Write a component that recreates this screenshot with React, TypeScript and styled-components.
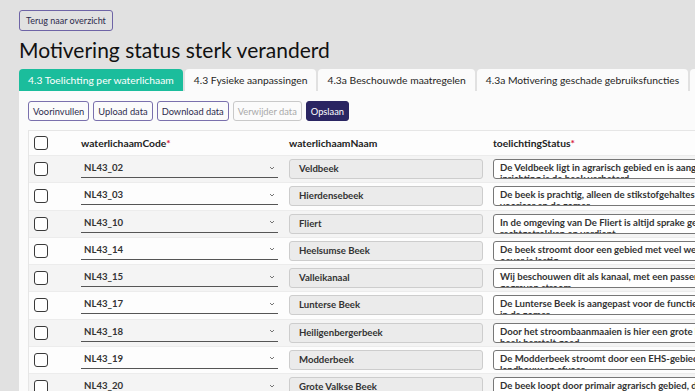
import React from 'react';
import styled, { createGlobalStyle } from 'styled-components';

const GlobalStyle = createGlobalStyle`
  html, body {
    margin: 0;
    padding: 0;
    background: #e1e1e1;
    overflow: hidden;
    font-family: Lato, "Noto Sans", sans-serif;
    color: #1f1f24;
  }
`;

const Page = styled.div`
  padding: 10px 0 0 19px;
  width: 676px;
`;

const BackButton = styled.button`
  font-family: inherit;
  font-size: 9px;
  color: #2d2b4d;
  background: transparent;
  border: 1px solid #6e64a6;
  border-radius: 3px;
  height: 21px;
  padding: 0 6px;
  cursor: pointer;
  display: block;
`;

const Title = styled.h1`
  margin: 4px 0 4px;
  font-size: 21px;
  font-weight: 400;
  line-height: 30px;
  color: #111;
`;

const Tabs = styled.div`
  display: flex;
  gap: 2px;
  white-space: nowrap;
`;

const Tab = styled.div<{ $active?: boolean }>`
  height: 22px;
  line-height: 22px;
  padding: 0 9px;
  font-size: 10.3px;
  border-radius: 4px 4px 0 0;
  background: ${(p) => (p.$active ? '#1bbd9c' : '#fbfbfb')};
  color: ${(p) => (p.$active ? '#fff' : '#1f1f24')};
  flex-shrink: 0;
`;

const Panel = styled.div`
  background: #fbfbfb;
  padding: 10px 0 0 9px;
  height: 320px;
`;

const Toolbar = styled.div`
  display: flex;
  gap: 4px;
  margin-bottom: 9px;
`;

const ActionButton = styled.button<{ $variant?: 'primary' | 'disabled' }>`
  font-family: inherit;
  font-size: 9.3px;
  height: 20px;
  padding: 0 4px;
  border-radius: 3px;
  border: 1px solid
    ${(p) => (p.$variant === 'disabled' ? '#c9c9c9' : p.$variant === 'primary' ? '#2a2562' : '#7a70ad')};
  background: ${(p) => (p.$variant === 'primary' ? '#2a2562' : 'transparent')};
  color: ${(p) => (p.$variant === 'disabled' ? '#a9a9a9' : p.$variant === 'primary' ? '#fff' : '#2d2b4d')};
`;

const Table = styled.div`
  border-top: 1px solid #e6e6e6;
  border-left: 1px solid #e6e6e6;
`;

const Row = styled.div<{ $shade?: boolean; $head?: boolean }>`
  display: grid;
  grid-template-columns: 52px 208px 204px 1fr;
  align-items: center;
  height: ${(p) => (p.$head ? '24px' : '26.25px')};
  background: ${(p) => (p.$shade ? '#f4f4f4' : '#fdfdfd')};
  border-bottom: 1px solid #ececec;
  overflow: hidden;
`;

const CheckCell = styled.div`
  display: flex;
  padding-left: 5px;
`;

const Checkbox = styled.span`
  width: 12px;
  height: 12px;
  border: 1.5px solid #3a3a3a;
  border-radius: 3px;
  background: #fff;
`;

const HeadCell = styled.div`
  font-size: 10.3px;
  font-weight: 700;
  color: #222;
  white-space: nowrap;
`;

const Required = styled.span`
  color: #d4163c;
`;

const Select = styled.div`
  width: 197px;
  height: 18px;
  box-sizing: border-box;
  border-bottom: 1px solid #555;
  display: flex;
  align-items: center;
  justify-content: space-between;
  padding: 0 3px 2px 3px;
  font-size: 9.6px;
  font-weight: 700;
  color: #333;
`;

const NameField = styled.div`
  width: 194px;
  height: 20px;
  box-sizing: border-box;
  border: 1px solid #cdcdcd;
  border-radius: 3px;
  background: #ebebeb;
  font-size: 9.6px;
  font-weight: 700;
  color: #333;
  padding-left: 9px;
  line-height: 18px;
`;

const StatusField = styled.textarea`
  width: 420px;
  height: 20px;
  box-sizing: border-box;
  border: 1px solid #777;
  border-radius: 3px;
  background: #fff;
  font-family: inherit;
  font-size: 9.6px;
  font-weight: 700;
  color: #333;
  line-height: 11px;
  padding: 2px 0 0 6px;
  resize: none;
  overflow: hidden;
  margin: 0;
  display: block;
`;

const Chevron = () => (
  <svg width="6" height="4" viewBox="0 0 6 4">
    <path d="M1 1l2 2 2-2" fill="none" stroke="#666" strokeWidth="0.9" />
  </svg>
);

const rows = [
  ['NL43_02', 'Veldbeek', 'De Veldbeek ligt in agrarisch gebied en is aangepast voor de functie. Met gebruik van variatie in inrichting is de beek verbeterd.'],
  ['NL43_03', 'Hierdensebeek', 'De beek is prachtig, alleen de stikstofgehaltes of fosfaat zijn soms aan de hoge kant in het voorjaar en de zomer.'],
  ['NL43_10', 'Fliert', 'In de omgeving van De Fliert is altijd sprake geweest van landbouw, waardoor de beek is rechtgetrokken en verdiept.'],
  ['NL43_14', 'Heelsumse Beek', 'De beek stroomt door een gebied met veel wegen en landbouw. De inrichting van een natuurlijke oever is lastig.'],
  ['NL43_15', 'Valleikanaal', 'Wij beschouwen dit als kanaal, met een passende inrichting voor de aanvoer van water door de gegraven stroom.'],
  ['NL43_17', 'Lunterse Beek', 'De Lunterse Beek is aangepast voor de functie waterafvoer en wordt voor alle stuwen gebruikt in de zomer.'],
  ['NL43_18', 'Heiligenbergerbeek', 'Door het stroombaanmaaien is hier een grote kans op het verdwijnen van vegetatie. Echter de beek herstelt goed.'],
  ['NL43_19', 'Modderbeek', 'De Modderbeek stroomt door een EHS-gebied, maar is verder aangepast aan de functie landbouw en afvoer.'],
  ['NL43_20', 'Grote Valkse Beek', 'De beek loopt door primair agrarisch gebied, de oevers zijn daardoor steil en de stroming is sterk.'],
];

const tabs = [
  '4.3 Toelichting per waterlichaam',
  '4.3 Fysieke aanpassingen',
  '4.3a Beschouwde maatregelen',
  '4.3a Motivering geschade gebruiksfuncties',
  '4.3b Overig',
];

export default function App() {
  return (
    <>
      <GlobalStyle />
      <Page>
        <BackButton>Terug naar overzicht</BackButton>
        <Title>Motivering status sterk veranderd</Title>
        <Tabs>
          {tabs.map((t, i) => (
            <Tab key={t} $active={i === 0}>
              {t}
            </Tab>
          ))}
        </Tabs>
        <Panel>
          <Toolbar>
            <ActionButton>Voorinvullen</ActionButton>
            <ActionButton>Upload data</ActionButton>
            <ActionButton>Download data</ActionButton>
            <ActionButton $variant="disabled">Verwijder data</ActionButton>
            <ActionButton $variant="primary">Opslaan</ActionButton>
          </Toolbar>
          <Table>
            <Row $head>
              <CheckCell>
                <Checkbox />
              </CheckCell>
              <HeadCell>
                waterlichaamCode<Required>*</Required>
              </HeadCell>
              <HeadCell>waterlichaamNaam</HeadCell>
              <HeadCell>
                toelichtingStatus<Required>*</Required>
              </HeadCell>
            </Row>
            {rows.map(([code, name, text], i) => (
              <Row key={code} $shade={i % 2 === 0}>
                <CheckCell>
                  <Checkbox />
                </CheckCell>
                <Select>
                  {code}
                  <Chevron />
                </Select>
                <NameField>{name}</NameField>
                <StatusField readOnly value={text} />
              </Row>
            ))}
          </Table>
        </Panel>
      </Page>
    </>
  );
}
